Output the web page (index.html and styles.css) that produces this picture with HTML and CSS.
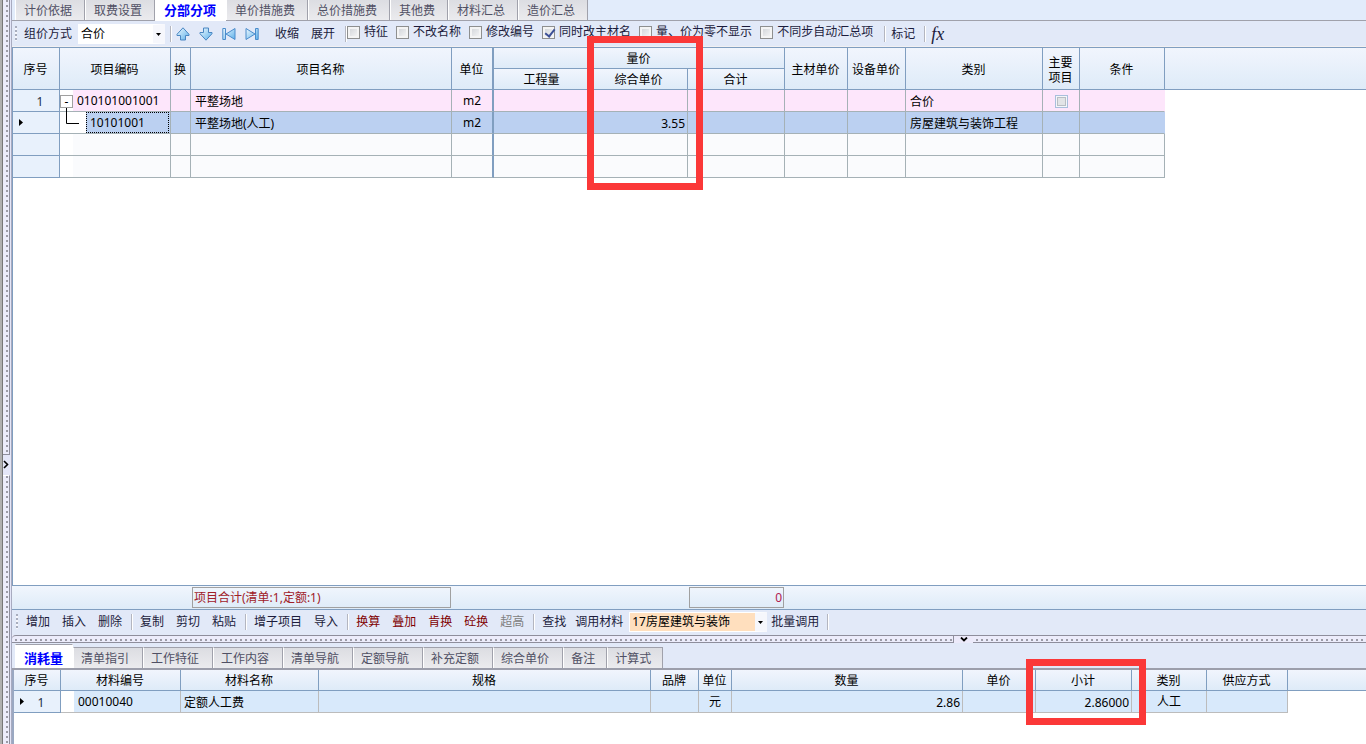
FILE: index.html
```html
<!DOCTYPE html>
<html lang="zh-CN">
<head>
<meta charset="utf-8">
<title>分部分项</title>
<link rel="stylesheet" href="styles.css">
</head>
<body>
<div class="app">
  <aside class="vsplit">
    <div class="vdots vdots-a"></div>
    <button class="vbtn" aria-label="展开侧栏"><svg width="6" height="9" viewBox="0 0 6 9"><path d="M1 1l3.500 3.500L1 8" fill="none" stroke="#000" stroke-width="1.600"/></svg></button>
    <div class="vdots vdots-b"></div>
  </aside>
  <main class="main">
    <nav class="tabs tabs-top">
      <button class="tab">计价依据</button><button class="tab">取费设置</button><button class="tab active">分部分项</button><button class="tab">单价措施费</button><button class="tab">总价措施费</button><button class="tab">其他费</button><button class="tab">材料汇总</button><button class="tab">造价汇总</button>
    </nav>
    <div class="toolbar toolbar-top">
      <span class="grip"></span>
      <label class="lbl" for="mode">组价方式</label>
      <span class="combo combo-mode"><select id="mode"><option>合价</option></select><svg class="caret" width="5" height="3" viewBox="0 0 5 3"><path d="M0 0h5L2.500 3z"/></svg></span>
      <span class="sep"></span>
      <button class="ic" aria-label="上移"><svg width="14" height="14" viewBox="0 0 14 14"><path d="M7 .8L13 7.300V8.500H9.500v4.500h-5V8.500H1V7.300z" fill="url(#g)" stroke="#4a86c2" stroke-linejoin="round"/></svg></button>
      <button class="ic" aria-label="下移"><svg width="14" height="14" viewBox="0 0 14 14"><path d="M7 13.200L1 6.700V5.500h3.500V1h5v4.500H13v1.200z" fill="url(#g)" stroke="#4a86c2" stroke-linejoin="round"/></svg></button>
      <button class="ic" aria-label="首条"><svg width="14" height="14" viewBox="0 0 14 14"><path d="M.8 1.500h2.700v11H.8zM13 1.500v11L4 7z" fill="url(#g)" stroke="#4a8ccc" stroke-linejoin="round"/></svg></button>
      <button class="ic" aria-label="末条"><svg width="14" height="14" viewBox="0 0 14 14"><path d="M13.200 1.500h-2.700v11h2.700zM1 1.500v11L10 7z" fill="url(#g)" stroke="#4a8ccc" stroke-linejoin="round"/></svg></button>
      <button class="tb">收缩</button><button class="tb">展开</button>
      <span class="sep sep-tight"></span>
      <div class="checks">
        <label><input type="checkbox">特征</label>
        <label><input type="checkbox">不改名称</label>
        <label><input type="checkbox">修改编号</label>
        <label><input type="checkbox" checked>同时改主材名</label>
        <label><input type="checkbox">量、价为零不显示</label>
        <label><input type="checkbox">不同步自动汇总项</label>
      </div>
      <span class="sep sep-wide"></span>
      <button class="tb tb-mark">标记</button>
      <span class="sep"></span>
      <button class="tb fx">fx</button>
    </div>
    <section class="pane">
      <table class="grid grid-top">
        <colgroup><col class="w47"><col class="w111"><col class="w20"><col class="w261"><col class="w42"><col class="w97"><col class="w97"><col class="w97"><col class="w63"><col class="w58"><col class="w137"><col class="w37"><col class="w85"><col></colgroup>
        <thead>
          <tr><th rowspan="2">序号</th><th rowspan="2">项目编码</th><th rowspan="2">换</th><th rowspan="2">项目名称</th><th rowspan="2" class="thick">单位</th><th colspan="3" class="group">量价</th><th rowspan="2">主材单价</th><th rowspan="2">设备单价</th><th rowspan="2">类别</th><th rowspan="2" class="two">主要<br>项目</th><th rowspan="2">条件</th><th rowspan="2" class="rest"></th></tr>
          <tr><th class="sub">工程量</th><th class="sub">综合单价</th><th class="sub">合计</th></tr>
        </thead>
        <tbody>
          <tr class="pink"><td class="no"><span class="num">1</span></td><td class="tree"><div class="node"><span class="gut"><button class="exp" aria-label="收起">-</button></span><span class="code">010101001001</span></div></td><td></td><td>平整场地</td><td class="c thick">m2</td><td></td><td></td><td></td><td></td><td></td><td>合价</td><td class="c"><input type="checkbox" class="dim" aria-label="主要项目" disabled></td><td class="last"></td><td class="rest"></td></tr>
          <tr class="sel"><td class="no"><svg class="ptr" width="4" height="7" viewBox="0 0 4 7"><path d="M0 0l4 3.500L0 7z"/></svg></td><td class="tree"><div class="node"><span class="gut gut-2"><svg width="26" height="21" viewBox="0 0 26 21"><path d="M6.500-4v15.500H19" fill="none" stroke="#000"/></svg></span><span class="code focus">10101001</span></div></td><td></td><td>平整场地(人工)</td><td class="c thick">m2</td><td></td><td class="r">3.55</td><td></td><td></td><td></td><td>房屋建筑与装饰工程</td><td></td><td class="last"></td><td class="rest"></td></tr>
          <tr class="blank"><td class="no"></td><td class="tree"><div class="node"><span class="gut"></span></div></td><td></td><td></td><td class="thick"></td><td></td><td></td><td></td><td></td><td></td><td></td><td></td><td></td><td class="rest"></td></tr>
          <tr class="blank"><td class="no"></td><td class="tree"><div class="node"><span class="gut"></span></div></td><td></td><td></td><td class="thick"></td><td></td><td></td><td></td><td></td><td></td><td></td><td></td><td></td><td class="rest"></td></tr>
        </tbody>
      </table>
    </section>
    <div class="summary"><output class="sum-a">项目合计(清单:1,定额:1)</output><output class="sum-b">0</output></div>
    <div class="toolbar toolbar-mid">
      <span class="grip"></span>
      <button class="tb">增加</button><button class="tb">插入</button><button class="tb">删除</button><span class="sep"></span>
      <button class="tb">复制</button><button class="tb">剪切</button><button class="tb">粘贴</button><span class="sep"></span>
      <button class="tb">增子项目</button><button class="tb">导入</button><span class="sep"></span>
      <button class="tb red">换算</button><button class="tb red">叠加</button><button class="tb red">肯换</button><button class="tb red">砼换</button><button class="tb grey" disabled>超高</button><span class="sep"></span>
      <button class="tb">查找</button><label class="lbl" for="lib">调用材料</label>
      <span class="combo combo-lib"><select id="lib"><option>17房屋建筑与装饰</option></select><svg class="caret" width="5" height="3" viewBox="0 0 5 3"><path d="M0 0h5L2.500 3z"/></svg></span>
      <button class="tb tb-batch">批量调用</button><span class="sep"></span>
    </div>
    <div class="hsplit">
      <div class="hdots hdots-a"></div>
      <button class="hbtn" aria-label="收起面板"><svg width="8" height="5" viewBox="0 0 8 5"><path d="M1 .5l3 3 3-3" fill="none" stroke="#000" stroke-width="1.800"/></svg></button>
      <div class="hdots hdots-b"></div>
    </div>
    <section class="lower">
      <nav class="tabs tabs-low">
        <button class="tab active">消耗量</button><button class="tab">清单指引</button><button class="tab">工作特征</button><button class="tab">工作内容</button><button class="tab">清单导航</button><button class="tab">定额导航</button><button class="tab">补充定额</button><button class="tab">综合单价</button><button class="tab short">备注</button><button class="tab short">计算式</button>
      </nav>
      <div class="lowpane">
      <table class="grid grid-low">
        <colgroup><col class="w47"><col class="w120"><col class="w138"><col class="w332"><col class="w48"><col class="w33"><col class="w231"><col class="w73"><col class="w96"><col class="w75"><col class="w81"><col></colgroup>
        <thead><tr><th>序号</th><th>材料编号</th><th>材料名称</th><th>规格</th><th>品牌</th><th>单位</th><th>数量</th><th>单价</th><th>小计</th><th>类别</th><th>供应方式</th><th class="rest"></th></tr></thead>
        <tbody><tr><td class="no"><svg class="ptr" width="4" height="7" viewBox="0 0 4 7"><path d="M0 0l4 3.500L0 7z"/></svg><span class="num">1</span></td><td class="tree"><div class="node"><span class="gut"></span><span class="code">00010040</span></div></td><td class="near">定额人工费</td><td></td><td></td><td class="c">元</td><td class="r">2.86</td><td></td><td class="r">2.86000</td><td class="c">人工</td><td></td><td class="rest"></td></tr></tbody>
      </table>
      </div>
    </section>
  </main>
  <div class="mark mark-price"></div>
  <div class="mark mark-total"></div>
</div>
<svg class="defs" width="0" height="0" aria-hidden="true"><defs><linearGradient id="g" x1="0" y1="0" x2="1" y2="1"><stop offset="0" stop-color="#eef9ff"/><stop offset="1" stop-color="#5cb0ea"/></linearGradient></defs></svg>
</body>
</html>
```

FILE: styles.css
```css
* { box-sizing: border-box; }
body, button, select, input, table { font: 12px/16px "Noto Sans", "Noto Sans CJK SC", sans-serif; }
body { margin: 0; background: #fff; color: #000; overflow: hidden; }
button { border: 0; background: none; padding: 0; margin: 0; color: inherit; white-space: nowrap; }
svg { display: block; }
.defs { position: absolute; }
.app { display: flex; height: 100vh; position: relative; }

/* side splitter */
.vsplit { flex: none; width: 12px; display: flex; flex-direction: column; background: #e4e6f8; border-left: 2px solid #b0b0b0; box-shadow: inset 1px 0 #777, inset -1px 0 #a8abc0; }
.vdots { margin: 0 2px 0 1px; border-right: 1px solid #8e8e9c; background: linear-gradient(90deg, #ececfb 3px, transparent 3px 5px, #ececfb 5px) 0 0 / 8px 5px, linear-gradient(#9b9ba6 2px, #ececfb 2px) 0 0 / 8px 5px; }
.vdots-a { flex: 455; border-bottom: 1px solid #8e8e9c; }
.vdots-b { flex: 269; border-top: 1px solid #fff; }
.vbtn { flex: none; height: 20px; padding-left: 1px; }

.main { flex: 1; min-width: 0; display: flex; flex-direction: column; background: #e2e9f8; }

/* tabs */
.tabs { flex: none; display: flex; align-items: flex-end; border-bottom: 1px solid #a0a1ab; padding-left: 3px; }
.tabs-top { height: 21px; background: #e2ecfb; }
.tab { height: 20px; padding: 2px 12px 0 8px; border: 1px solid #a0a1ab; border-width: 0 1px 0 1px; border-left-color: #fff; background: linear-gradient(#dcdde2, #ebebee); color: #505064; }
.tab.active { background: #fff; border-color: #fff; color: #00f; font-weight: 700; font-size: 13px; height: 21px; margin-bottom: -1px; padding: 0 9px 1px 8px; }
.tabs-low { height: 27px; border-bottom: 2px solid #9c9eab; }
.tabs-low .tab { height: 21px; padding: 2px 13px 0 7px; border-top: 1px solid #a0a1ab; }
.tabs-low .tab.short { padding-right: 11px; }
.tabs-low .tab.active { height: 24px; padding: 2px 9px 0 8px; margin-bottom: 0; border-top-color: #a0a1ab; }

/* toolbars */
.toolbar { flex: none; display: flex; align-items: center; color: #1c1c3c; white-space: nowrap; }
.toolbar-top { height: 26px; padding-left: 3px; border-bottom: 1px solid #f2f0f2; }
.toolbar-mid { height: 25px; padding: 0 0 2px 4px; }
.grip { flex: none; width: 2px; height: 15px; margin-right: 2px; background: repeating-linear-gradient(#a8adbd 0 2px, #f6f6fc 2px 4px); }
.lbl { padding: 0 6px 0 5px; }
.toolbar-mid .lbl { padding: 0 6px 0 3px; }
.sep { flex: none; width: 2px; height: 16px; margin: 0 1px 0 3px; background: linear-gradient(90deg, #b4b6c0 50%, #fff 50%); }
.tb { padding: 0 6px; height: 22px; }
.red { color: #800000; }
.grey { color: #808080; }
.combo { position: relative; display: block; height: 20px; background: #fff; }
.combo select { appearance: none; width: 100%; height: 20px; border: 1px solid #fff; border-radius: 0; margin: 0; padding: 0 2px; background: #fff; color: #000; display: block; }
.caret { position: absolute; right: 4px; top: 9px; }
.combo-mode { width: 87px; margin-right: 2px; }
.combo-mode select { border-right: 12px solid #f6f7fc; }
.combo-lib { width: 138px; }
.combo-lib select { background: #ffdfbe; border-right: 12px solid #f6f7fc; }
.tb-batch { padding: 0 5px 0 4px; }
.sep + .ic { margin-left: -2px; }
.ic { width: 23px; height: 20px; display: grid; place-items: center; }
.ic + .tb { margin-left: 6px; }
.sep-tight { margin: 0 0 0 4px; }
.sep-wide { margin-left: 11px; }
.tb-mark { padding: 0 6px 0 4px; }
.checks { display: flex; gap: 8px; padding-bottom: 3px; }
.checks label { display: flex; align-items: center; gap: 4px; }
input[type="checkbox"] { appearance: none; width: 13px; height: 13px; margin: 0; border: 1px solid #8e8f8f; background: linear-gradient(135deg, #cdd0d5, #fafafa) padding-box; box-shadow: inset 0 0 0 2px #f4f4f4; display: block; }
input[type="checkbox"]:checked::after { content: ""; display: block; width: 4px; height: 8px; margin: 0 0 0 4px; border: solid #3c4f96; border-width: 0 2px 2px 0; transform: rotate(38deg); }
input.dim { margin: 0 auto; border-color: #a9bfdc; box-shadow: inset 0 0 0 1px #f4f6fa, inset 0 0 0 2px #b9bec4; background: #e2e4e6; }
.fx { padding: 0 4px; font: italic 400 18px/18px "Liberation Serif", serif; }

/* data grids */
.pane { flex: 1; min-height: 0; background: #fff; border-left: 1px solid #809ec0; border-top: 1px solid #809ec0; overflow: hidden; }
.grid { table-layout: fixed; width: 100%; border-spacing: 0; }
.grid th { font-weight: 400; padding: 2px 1px 0 0; border-right: 1px solid #809ec0; border-bottom: 1px solid #809ec0; background: linear-gradient(#f1f5fd, #deebf8); }
.grid-top th { height: 42px; }
.grid-top th.group, .grid-top th.sub { height: 21px; }
.grid th.two { line-height: 15px; }
.grid th.rest { border-right: 0; }
.grid td { height: 22px; padding: 2px 2px 0 4px; border-right: 1px solid #a5b1b6; border-bottom: 1px solid #a5b1b6; line-height: 16px; white-space: nowrap; }
.grid .thick { border-right: 2px solid #809ec0; }
.grid td.no { background: #e8f1fc; border-color: #809ec0; position: relative; padding: 2px 0 0; }
.grid td.tree { padding: 0; }
.grid td.c { text-align: center; padding: 1px 0 0; }
.grid td.r { text-align: right; }
.grid td.near { padding-left: 3px; }
.grid tbody td.rest { border: 0; background: #fff; }
.num { display: block; padding-left: 8px; text-align: center; color: #1c3048; }
.ptr { position: absolute; left: 6px; top: 7px; }
.node { display: flex; height: 21px; }
.gut { flex: none; width: 13px; background: #fff; }
.gut-2 { width: 26px; }
.gut-2 svg { overflow: visible; position: relative; }
.exp { display: block; width: 13px; height: 13px; margin-top: 5px; border: 1px solid #a0a0a0; line-height: 9px; background: #fff; }
.code { padding: 3px 0 0 4px; }
.code.focus { flex: 1; padding: 2px 0 0 3px; border: 1px dotted #000; margin-right: 1px; }
.pink td { background: #fde6fb; }
.pink td.last { border-right-color: #fde6fb; }
.sel td { background: #bbd0f1; }
.sel td.last { border-right-color: #bbd0f1; }
.blank td { background: #fafbfd; }

.summary { flex: none; height: 25px; padding: 1px 0 0 180px; display: flex; align-items: flex-start; border: solid #809ec0; border-width: 1px 0 1px 0; background: linear-gradient(#f1f6fd, #deebf8); color: #a02028; }
.sum-a, .sum-b { height: 21px; border: 1px solid #a0a0a0; line-height: 20px; padding: 0 1px; }
.sum-a { width: 259px; margin-right: 238px; }
.sum-b { width: 95px; text-align: right; color: #b02050; }

/* horizontal splitter */
.hsplit { flex: none; height: 8px; display: flex; background: #eceafa; }
.hdots { border: 1px solid #8e8e9c; border-width: 1px 0; background: linear-gradient(90deg, #ececfb 3px, transparent 3px) 0 0 / 5px 6px, linear-gradient(#ececfb 3px, #9b9ba6 3px 5px, #ececfb 5px) 0 0 / 5px 6px; }
.hdots-a { flex: 941; border-radius: 4px 0 0 0; border-right-width: 1px; }
.hdots-b { flex: 393; }
.hbtn { flex: none; width: 19px; display: grid; place-items: center; border-top: 1px solid #8e8e9c; }

.lower { flex: none; height: 101px; display: flex; flex-direction: column; }
.lowpane { flex: 1; background: #fff; border-left: 2px solid #9aa8c2; }
.grid-low th { height: 21px; }
.grid-low td { background: #d8e9fb; border-color: #bcbcbc; }
.grid-low td.no { background: #e8f1fc; }

/* callout frames */
.mark { position: absolute; border: 7px solid #fb3838; pointer-events: none; }
.mark-price { left: 587px; top: 36px; width: 116px; height: 154px; }
.mark-total { left: 1026px; top: 659px; width: 120px; height: 66px; }

.w20 { width: 20px; } .w33 { width: 33px; } .w37 { width: 37px; } .w42 { width: 42px; } .w47 { width: 47px; } .w48 { width: 48px; }
.w58 { width: 58px; } .w63 { width: 63px; } .w73 { width: 73px; } .w75 { width: 75px; } .w81 { width: 81px; } .w85 { width: 85px; }
.w96 { width: 96px; } .w97 { width: 97px; } .w111 { width: 111px; } .w120 { width: 120px; } .w137 { width: 137px; } .w138 { width: 138px; }
.w231 { width: 231px; } .w261 { width: 261px; } .w332 { width: 332px; }
```
